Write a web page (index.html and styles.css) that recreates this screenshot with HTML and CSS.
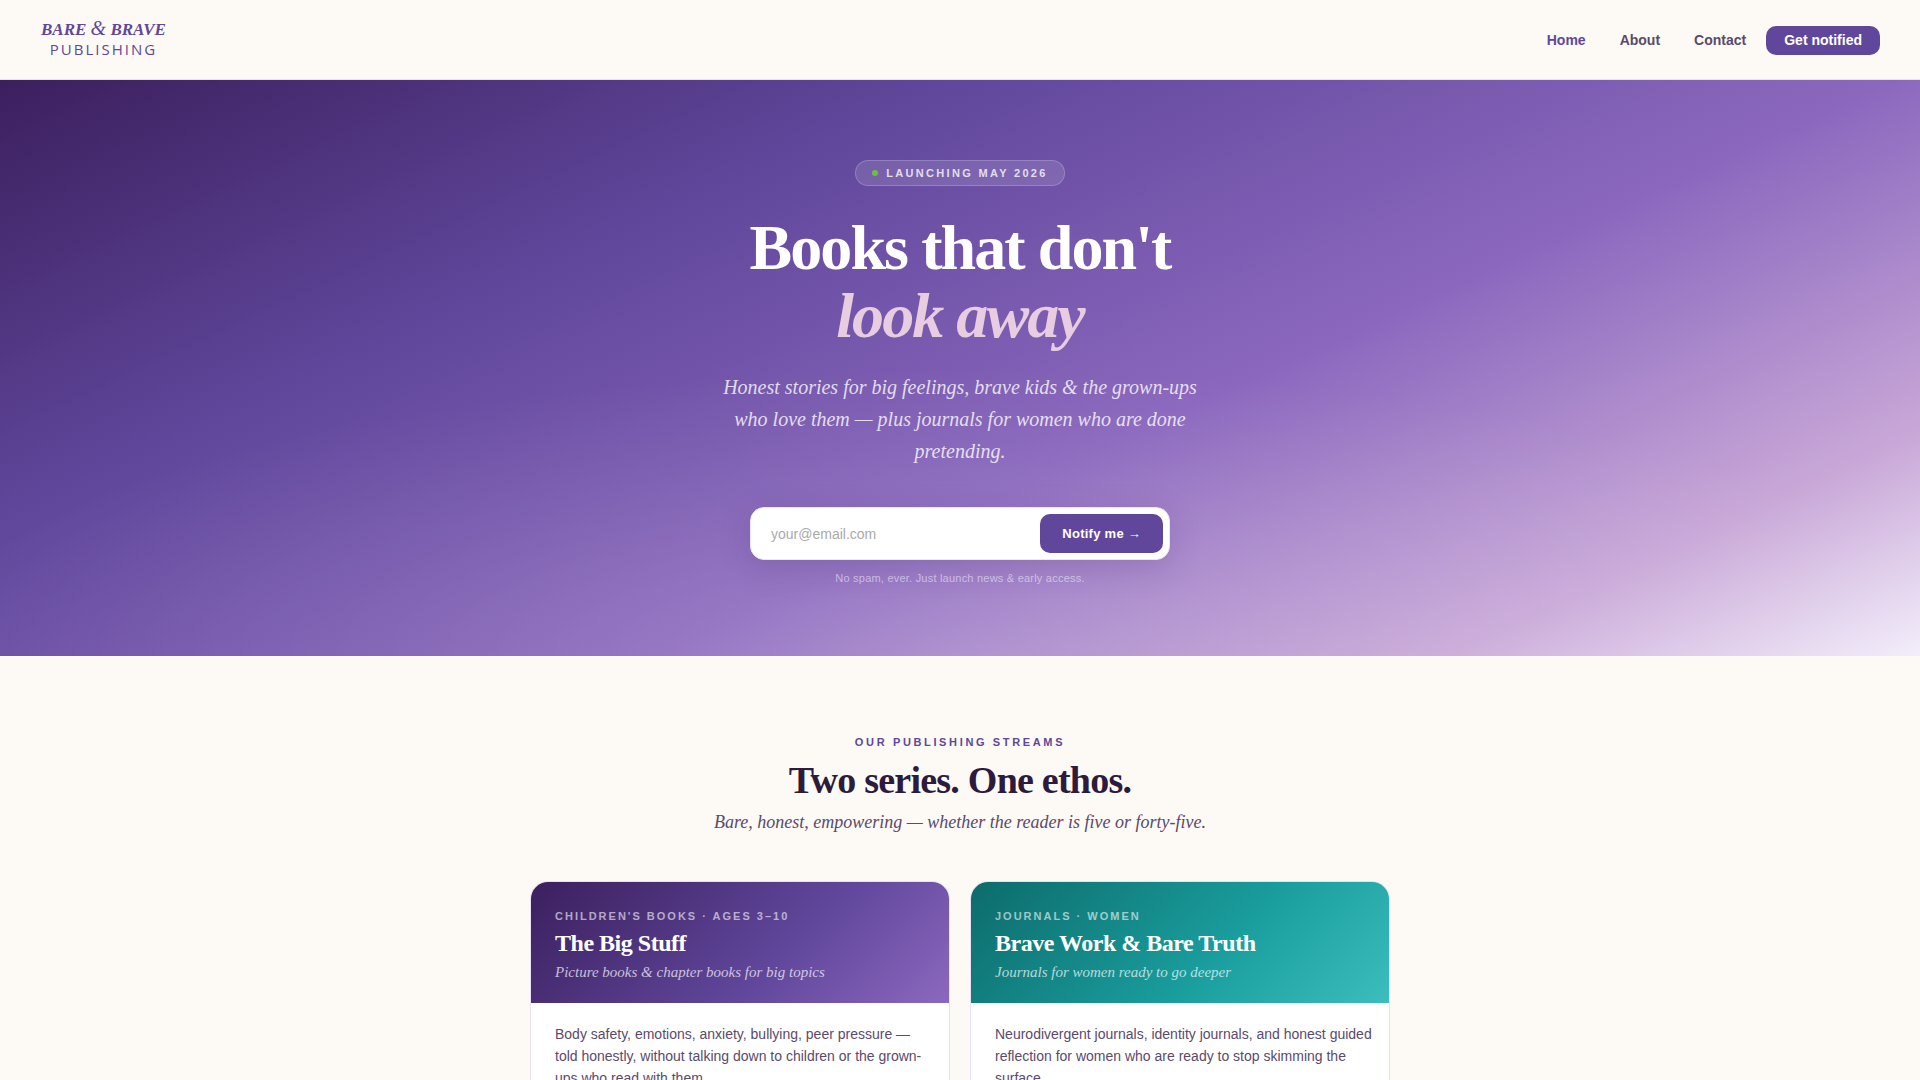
FILE: index.html
```html
<!DOCTYPE html>
<html lang="en">
<head>
  <meta charset="UTF-8">
  <meta name="viewport" content="width=device-width, initial-scale=1.0">
  <title>Bare &amp; Brave Publishing</title>
  <link rel="stylesheet" href="styles.css">
</head>
<body>

  <header class="site-header">
    <a href="#" class="logo">
      <span class="logo-name">BARE <span class="logo-amp">&amp;</span> BRAVE</span>
      <span class="logo-sub">PUBLISHING</span>
    </a>
    <nav class="nav">
      <a href="#" class="active">Home</a>
      <a href="#about">About</a>
      <a href="#contact">Contact</a>
      <a href="#notify" class="nav-cta">Get notified</a>
    </nav>
  </header>

  <main>
    <section class="hero">
      <div class="badge"><span class="badge-dot"></span>Launching May 2026</div>
      <h1>Books that don't<br><em>look away</em></h1>
      <p class="hero-text">Honest stories for big feelings, brave kids &amp; the grown-ups who love them — plus journals for women who are done pretending.</p>
      <form class="notify" id="notify">
        <input type="email" name="email" placeholder="your@email.com" aria-label="Email address" required>
        <button type="submit">Notify me →</button>
      </form>
      <p class="hero-note">No spam, ever. Just launch news &amp; early access.</p>
    </section>

    <section class="streams">
      <p class="eyebrow">Our publishing streams</p>
      <h2>Two series. One ethos.</h2>
      <p class="streams-text">Bare, honest, empowering — whether the reader is five or forty-five.</p>

      <div class="cards">
        <article class="card">
          <div class="card-head purple">
            <p class="card-label">Children's Books · Ages 3–10</p>
            <h3>The Big Stuff</h3>
            <p class="card-sub">Picture books &amp; chapter books for big topics</p>
          </div>
          <div class="card-body">
            <p>Body safety, emotions, anxiety, bullying, peer pressure — told honestly, without talking down to children or the grown-ups who read with them.</p>
          </div>
        </article>

        <article class="card">
          <div class="card-head teal">
            <p class="card-label">Journals · Women</p>
            <h3>Brave Work &amp; Bare Truth</h3>
            <p class="card-sub">Journals for women ready to go deeper</p>
          </div>
          <div class="card-body">
            <p>Neurodivergent journals, identity journals, and honest guided reflection for women who are ready to stop skimming the surface.</p>
          </div>
        </article>
      </div>
    </section>
  </main>

</body>
</html>
```
FILE: styles.css
```css
* {
  box-sizing: border-box;
  margin: 0;
  padding: 0;
}

body {
  font-family: "Liberation Sans", Arial, sans-serif;
  background: #fdfaf5;
  color: #2d1b3d;
}

a {
  text-decoration: none;
}

/* header */
.site-header {
  display: flex;
  justify-content: space-between;
  align-items: center;
  height: 80px;
  padding: 1px 40px 0;
  border-bottom: 1px solid #e8e0f0;
}

.logo {
  display: flex;
  flex-direction: column;
  align-items: center;
  padding: 0 0 4px 1px;
  color: #60479b;
}

.logo-name {
  font-family: "Liberation Serif", "Times New Roman", serif;
  font-size: 17px;
  font-style: italic;
  font-weight: bold;
  line-height: 20px;
}

.logo-amp {
  font-size: 20px;
  font-weight: normal;
}

.logo-sub {
  font-family: "Open Sans", sans-serif;
  font-size: 15px;
  line-height: 18px;
  letter-spacing: 2px;
}

.nav {
  display: flex;
  align-items: center;
  gap: 6px;
}

.nav a {
  padding: 7px 14px;
  font-size: 14px;
  font-weight: bold;
  line-height: 15px;
  color: #5a4a6e;
}

.nav a.active {
  color: #60479b;
}

.nav a.nav-cta {
  padding: 7px 18px;
  border-radius: 10px;
  background: #60479b;
  color: #fff;
}

/* hero */
.hero {
  display: flex;
  flex-direction: column;
  align-items: center;
  padding: 80px 24px 70px;
  text-align: center;
  background:
    radial-gradient(ellipse 55% 50% at 50% 100%, rgba(255, 255, 255, 0.14), transparent),
    linear-gradient(155deg, #3b1f5e 0%, #60479b 30%, #8b68be 60%, #c9a8d8 85%, #f3eefa 100%);
}

.badge {
  display: flex;
  align-items: center;
  gap: 8px;
  padding: 6px 16px;
  border: 1px solid rgba(255, 255, 255, 0.2);
  border-radius: 20px;
  background: rgba(255, 255, 255, 0.12);
  font-size: 11px;
  font-weight: bold;
  line-height: 12px;
  letter-spacing: 0.21em;
  text-transform: uppercase;
  color: rgba(255, 255, 255, 0.8);
}

.badge-dot {
  width: 6px;
  height: 6px;
  border-radius: 50%;
  background: #6dbf3e;
}

h1 {
  margin-top: 28px;
  font-family: "Liberation Serif", "Times New Roman", serif;
  font-size: 64px;
  line-height: 68px;
  letter-spacing: -0.03em;
  color: #fff;
}

h1 em {
  color: #e8cce0;
}

.hero-text {
  max-width: 500px;
  margin-top: 21px;
  font-family: "Liberation Serif", "Times New Roman", serif;
  font-size: 20px;
  font-style: italic;
  line-height: 32px;
  color: rgba(255, 255, 255, 0.8);
}

.notify {
  display: flex;
  width: 100%;
  max-width: 420px;
  margin-top: 40px;
  padding: 6px;
  border: 1px solid #eee4f5;
  border-radius: 14px;
  background: #fff;
  box-shadow: 0 8px 32px rgba(59, 31, 94, 0.18);
}

.notify input {
  flex: 1;
  min-width: 0;
  padding: 0 14px;
  border: none;
  outline: none;
  background: transparent;
  font-family: inherit;
  font-size: 14px;
}

.notify input::placeholder {
  color: #aaa;
}

.notify button {
  padding: 12px 22px;
  border: none;
  border-radius: 10px;
  background: #60479b;
  font-family: inherit;
  font-size: 13px;
  font-weight: bold;
  line-height: 15px;
  letter-spacing: 0.02em;
  color: #fff;
}

.hero-note {
  margin-top: 10px;
  font-size: 11px;
  line-height: 16px;
  letter-spacing: 0.02em;
  color: rgba(255, 255, 255, 0.5);
}

/* streams */
.streams {
  max-width: 908px;
  margin: 0 auto;
  padding: 80px 24px;
  text-align: center;
}

.eyebrow {
  font-size: 11px;
  font-weight: bold;
  line-height: 12px;
  letter-spacing: 0.24em;
  text-transform: uppercase;
  color: #60479b;
}

h2 {
  margin-top: 10px;
  font-family: "Liberation Serif", "Times New Roman", serif;
  font-size: 38px;
  line-height: 44px;
  letter-spacing: -0.02em;
}

.streams-text {
  margin-top: 10px;
  font-family: "Liberation Serif", "Times New Roman", serif;
  font-size: 18px;
  font-style: italic;
  line-height: 21px;
  color: #5a4a6e;
}

.cards {
  display: grid;
  grid-template-columns: 1fr 1fr;
  gap: 20px;
  margin-top: 48px;
  text-align: left;
}

.card {
  overflow: hidden;
  border: 1px solid #e8e0f5;
  border-radius: 18px;
  background: #fff;
}

.card-head {
  padding: 28px 24px 22px;
  color: #fff;
}

.purple {
  background: linear-gradient(135deg, #3b1f5e, #60479b 60%, #8b68be);
}

.teal {
  background: linear-gradient(135deg, #0d6b6b, #1a9e9e 60%, #3dbdbd);
}

.card-label {
  font-size: 11px;
  font-weight: bold;
  line-height: 12px;
  letter-spacing: 2px;
  text-transform: uppercase;
  color: rgba(255, 255, 255, 0.6);
}

h3 {
  margin-top: 7px;
  font-family: "Liberation Serif", "Times New Roman", serif;
  font-size: 24px;
  line-height: 28px;
  letter-spacing: -0.02em;
}

.card-sub {
  margin-top: 6px;
  font-family: "Liberation Serif", "Times New Roman", serif;
  font-size: 15px;
  font-style: italic;
  line-height: 18px;
  color: rgba(255, 255, 255, 0.7);
}

.card-body {
  padding: 20px 16px 28px 24px;
  font-size: 14px;
  line-height: 22px;
  color: #5a4a6e;
}
```
